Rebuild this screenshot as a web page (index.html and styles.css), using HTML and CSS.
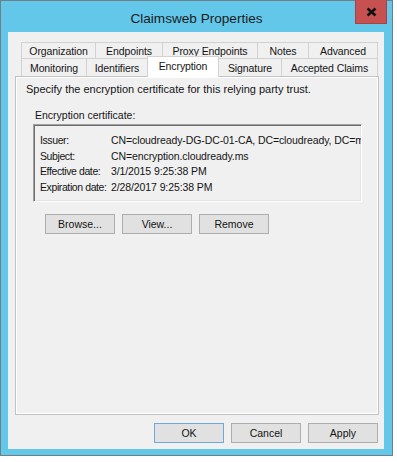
FILE: index.html
```html
<!DOCTYPE html>
<html>
<head>
<meta charset="utf-8">
<title>Claimsweb Properties</title>
<link rel="stylesheet" href="styles.css">
</head>
<body>
<div class="window">
  <div class="titlebar">
    <span class="title">Claimsweb Properties</span>
    <div class="close" aria-label="Close">
      <svg width="11" height="10" viewBox="0 0 11 10"><path d="M1.5 1.5 L9.5 8.5 M9.5 1.5 L1.5 8.5" stroke="#111" stroke-width="2.6" fill="none"/></svg>
    </div>
  </div>
  <div class="client">
    <div class="tabctl">
      <div class="tabrow row1">
        <div class="tab">Organization</div>
        <div class="tab">Endpoints</div>
        <div class="tab">Proxy Endpoints</div>
        <div class="tab">Notes</div>
        <div class="tab">Advanced</div>
      </div>
      <div class="tabrow row2">
        <div class="tab">Monitoring</div>
        <div class="tab">Identifiers</div>
        <div class="tab selected">Encryption</div>
        <div class="tab">Signature</div>
        <div class="tab">Accepted Claims</div>
      </div>
      <div class="panel">
        <p class="desc">Specify the encryption certificate for this relying party trust.</p>
        <p class="caption">Encryption certificate:</p>
        <div class="certbox">
          <div class="certrow"><span class="k">Issuer:</span><span class="v">CN=cloudready-DG-DC-01-CA, DC=cloudready, DC=ms</span></div>
          <div class="certrow"><span class="k">Subject:</span><span class="v">CN=encryption.cloudready.ms</span></div>
          <div class="certrow"><span class="k">Effective date:</span><span class="v">3/1/2015 9:25:38 PM</span></div>
          <div class="certrow"><span class="k">Expiration date:</span><span class="v">2/28/2017 9:25:38 PM</span></div>
        </div>
        <div class="actions">
          <button class="btn">Browse...</button>
          <button class="btn">View...</button>
          <button class="btn">Remove</button>
        </div>
      </div>
    </div>
    <div class="footer">
      <button class="btn default">OK</button>
      <button class="btn">Cancel</button>
      <button class="btn">Apply</button>
    </div>
  </div>
</div>
</body>
</html>
```

FILE: styles.css
```css
* { box-sizing: border-box; }
html, body { margin: 0; padding: 0; background: #ffffff; }
body { font-family: "Liberation Sans", Arial, sans-serif; font-size: 10.5px; color: #141414; }

.window {
  width: 393px;
  height: 456px;
  border: 1px solid #6f7f88;
  background: #63c7ea;
  display: flex;
  flex-direction: column;
}

.titlebar {
  height: 31px;
  position: relative;
  display: flex;
  align-items: center;
  justify-content: center;
  padding-top: 3px;
}
.title { font-size: 13.6px; color: #1c1c1c; }
.close {
  position: absolute;
  top: -1px;
  right: 5px;
  width: 32px;
  height: 24px;
  background: #c75050;
  border: 1px solid #a84343;
  border-top: none;
  display: flex;
  align-items: center;
  justify-content: center;
}

.client {
  margin: 0 8px 6px 7px;
  height: 417px;
  background: #f0f0f0;
  display: flex;
  flex-direction: column;
  padding: 10px 6px 6px 7px;
}

.tabctl { display: flex; flex-direction: column; }
.tabrow { display: grid; margin-left: 6px; width: 357px; }
.row1 { grid-template-columns: 74px 67px 95px 51px 70px; height: 16px; }
.row2 { grid-template-columns: 65px 61px 71px 63px 97px; height: 18px; }

.tab {
  border-top: 1px solid #d2d2d2;
  border-left: 1px solid #d2d2d2;
  background: #f0f0f0;
  display: flex;
  align-items: center;
  justify-content: center;
  white-space: nowrap;
  padding-top: 1px;
  letter-spacing: -0.1px;
}
.tab:last-child { border-right: 1px solid #d2d2d2; }
.tab.selected {
  background: #ffffff;
  border: 1px solid #d2d2d2;
  border-bottom: none;
  margin-top: -2px;
  margin-right: -1px;
  margin-bottom: -1px;
  position: relative;
  z-index: 1;
  padding-top: 0;
  padding-bottom: 3px;
}

.panel {
  width: 364px;
  height: 339px;
  border: 1px solid #c2c2c2;
  box-shadow: inset 0 0 0 1px #ffffff;
  background: #f0f0f0;
  display: flex;
  flex-direction: column;
  align-items: flex-start;
}
.desc { margin: 5px 0 0 10px; line-height: 15px; font-size: 11px; }
.caption { margin: 11px 0 0 19px; line-height: 15px; }

.certbox {
  margin: 1px 0 0 17px;
  width: 329px;
  height: 78px;
  border-top: 1px solid #a0a0a0;
  border-left: 1px solid #a0a0a0;
  border-right: 1px solid #ffffff;
  border-bottom: 1px solid #ffffff;
  box-shadow: inset 1px 1px 0 #6e6e6e, inset -1px -1px 0 #e3e3e3;
  padding: 8px 0 0 6px;
  overflow: hidden;
}
.certrow { display: flex; line-height: 15.6px; white-space: nowrap; }
.k { width: 71px; flex: none; letter-spacing: -0.4px; }
.v { flex: none; letter-spacing: -0.1px; }

.actions { display: flex; gap: 7px; margin: 12px 0 0 29px; }

.btn {
  width: 70px;
  height: 20px;
  background: #e1e1e1;
  border: 1px solid #adadad;
  font-family: "Liberation Sans", Arial, sans-serif;
  font-size: 10.5px;
  color: #141414;
  padding: 0;
  margin: 0;
}
.btn.default { border-color: #6fa8dc; }

.footer {
  display: flex;
  justify-content: flex-end;
  gap: 7px;
  margin-top: 8px;
}
```
